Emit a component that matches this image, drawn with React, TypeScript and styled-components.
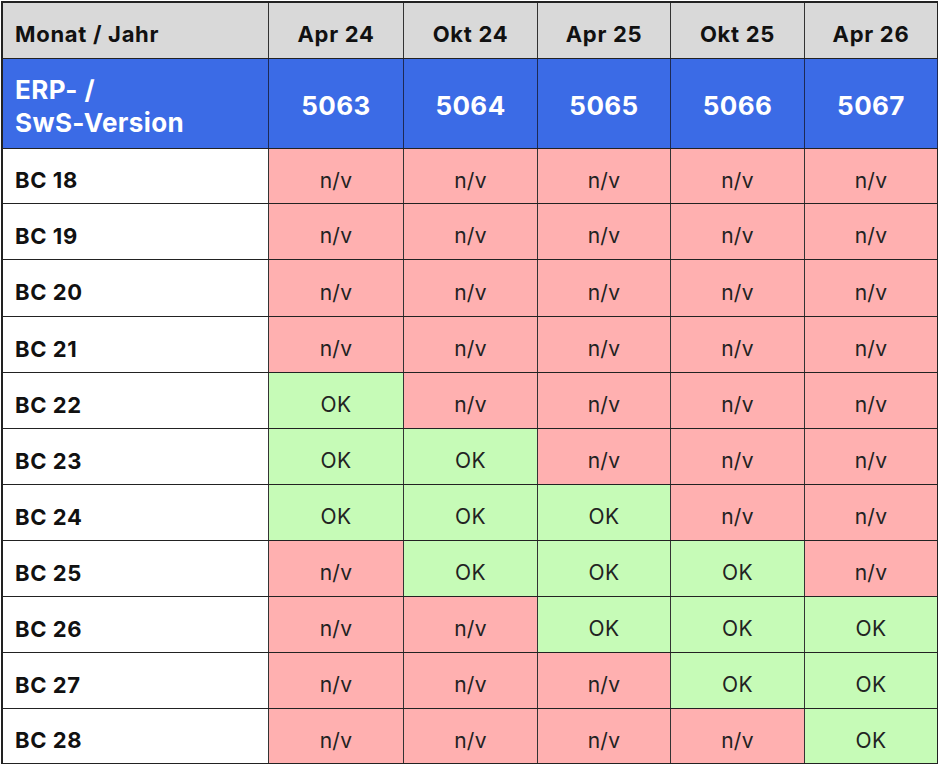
import React from "react";
import styled, { createGlobalStyle } from "styled-components";

const GlobalStyle = createGlobalStyle`
  html, body { margin: 0; padding: 0; background: #ffffff; }
  body { font-family: Inter, "DejaVu Sans", sans-serif; }
  * { box-sizing: border-box; }
`;

const COLS = "266px 135px 134px 133px 134px 133px";
const LINE = "#222222";

const Page = styled.div`
  padding: 1px 0 0 1px;
`;

const Table = styled.div`
  width: 937px;
  border: 2px solid ${LINE};
  border-right-width: 1px;
  display: flex;
  flex-direction: column;
`;

const Row = styled.div<{ $h: number; $last?: boolean }>`
  display: grid;
  grid-template-columns: ${COLS};
  height: ${(p) => p.$h}px;
  border-bottom: ${(p) => (p.$last ? "0" : `1px solid ${LINE}`)};
`;

const Cell = styled.div<{ $lastCol?: boolean }>`
  display: flex;
  align-items: center;
  border-right: 1px solid ${(p) => (p.$lastCol ? LINE : "#333333")};
  min-width: 0;
  white-space: nowrap;
`;

const HeadCell = styled(Cell)<{ $left?: boolean }>`
  background: #d9d9d9;
  color: #111111;
  font-weight: 700;
  font-size: 22px;
  letter-spacing: 0.7px;
  justify-content: ${(p) => (p.$left ? "flex-start" : "center")};
  padding: 6px 0 0 ${(p) => (p.$left ? "12px" : "0")};
`;

const VersionCell = styled(Cell)<{ $left?: boolean }>`
  background: #3b6be6;
  color: #ffffff;
  font-weight: 700;
  font-size: 26px;
  letter-spacing: 0.4px;
  line-height: 33px;
  justify-content: ${(p) => (p.$left ? "flex-start" : "center")};
  padding: 4px 0 0 ${(p) => (p.$left ? "12px" : "0")};
  border-right-color: #1d2a55;
`;

const LabelCell = styled(Cell)`
  background: #ffffff;
  color: #111111;
  font-weight: 700;
  font-size: 22px;
  letter-spacing: 0.6px;
  padding: 8px 0 0 12px;
`;

const StatusCell = styled(Cell)<{ $ok: boolean }>`
  background: ${(p) => (p.$ok ? "#c6fbb7" : "#ffb0b0")};
  color: #222222;
  font-weight: 400;
  font-size: 21px;
  letter-spacing: 0.3px;
  justify-content: center;
  padding-top: 8px;
`;

const months = ["Apr 24", "Okt 24", "Apr 25", "Okt 25", "Apr 26"];
const versions = ["5063", "5064", "5065", "5066", "5067"];

const rows: { label: string; ok: boolean[] }[] = [
  { label: "BC 18", ok: [false, false, false, false, false] },
  { label: "BC 19", ok: [false, false, false, false, false] },
  { label: "BC 20", ok: [false, false, false, false, false] },
  { label: "BC 21", ok: [false, false, false, false, false] },
  { label: "BC 22", ok: [true, false, false, false, false] },
  { label: "BC 23", ok: [true, true, false, false, false] },
  { label: "BC 24", ok: [true, true, true, false, false] },
  { label: "BC 25", ok: [false, true, true, true, false] },
  { label: "BC 26", ok: [false, false, true, true, true] },
  { label: "BC 27", ok: [false, false, false, true, true] },
  { label: "BC 28", ok: [false, false, false, false, true] },
];

const heights = [55, 56, 57, 56, 56, 56, 56, 56, 56, 56, 54];

export default function App() {
  return (
    <Page>
      <GlobalStyle />
      <Table>
        <Row $h={56}>
          <HeadCell $left>Monat / Jahr</HeadCell>
          {months.map((m, i) => (
            <HeadCell key={m} $lastCol={i === 4}>
              {m}
            </HeadCell>
          ))}
        </Row>
        <Row $h={90}>
          <VersionCell $left>
            ERP- /
            <br />
            SwS-Version
          </VersionCell>
          {versions.map((v, i) => (
            <VersionCell key={v} $lastCol={i === 4}>
              {v}
            </VersionCell>
          ))}
        </Row>
        {rows.map((r, ri) => (
          <Row key={r.label} $h={heights[ri]} $last={ri === rows.length - 1}>
            <LabelCell>{r.label}</LabelCell>
            {r.ok.map((ok, ci) => (
              <StatusCell key={ci} $ok={ok} $lastCol={ci === 4}>
                {ok ? "OK" : "n/v"}
              </StatusCell>
            ))}
          </Row>
        ))}
      </Table>
    </Page>
  );
}
